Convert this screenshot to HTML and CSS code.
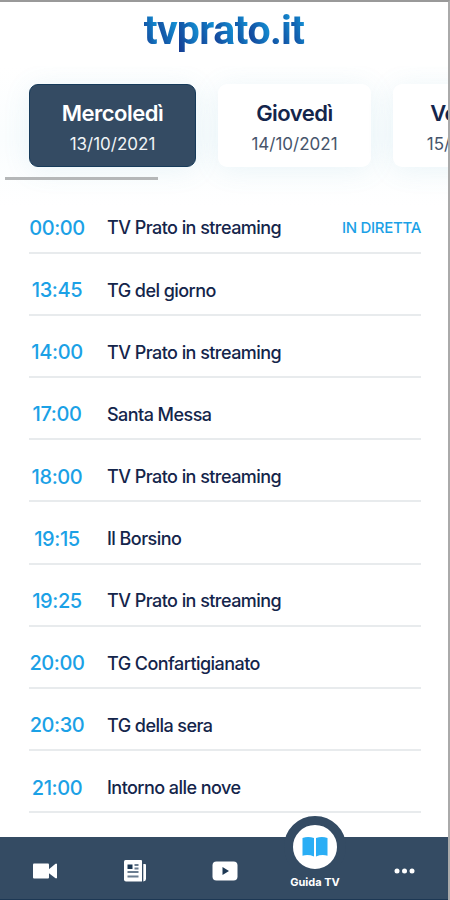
FILE: index.html
```html
<!DOCTYPE html>
<html lang="it">
<head>
    <meta charset="UTF-8">
    <meta name="viewport" content="width=device-width, initial-scale=1.0">
    <title>Guida TV</title>
    <link rel="stylesheet" href="styles.css">
</head>
<body>
    <div class="app">
        <header class="header">
            <h1 class="logo"><span>t</span><span>v</span><span>p</span><span>r</span><span>a</span><span>t</span><span>o</span><span>.</span><span>i</span><span>t</span></h1>
        </header>

        <!-- Giorni -->
        <section class="days">
            <div class="day active">
                <span class="day-name">Mercoledì</span>
                <span class="day-date">13/10/2021</span>
            </div>
            <div class="day">
                <span class="day-name">Giovedì</span>
                <span class="day-date">14/10/2021</span>
            </div>
            <div class="day">
                <span class="day-name">Venerdì</span>
                <span class="day-date">15/10/2021</span>
            </div>
        </section>
        <div class="scrollbar"></div>

        <!-- Palinsesto -->
        <ul class="programs">
            <li class="program"><span class="time">00:00</span><span class="title">TV Prato in streaming</span><span class="live">IN DIRETTA</span></li>
            <li class="program"><span class="time">13:45</span><span class="title">TG del giorno</span></li>
            <li class="program"><span class="time">14:00</span><span class="title">TV Prato in streaming</span></li>
            <li class="program"><span class="time">17:00</span><span class="title">Santa Messa</span></li>
            <li class="program"><span class="time">18:00</span><span class="title">TV Prato in streaming</span></li>
            <li class="program"><span class="time">19:15</span><span class="title">Il Borsino</span></li>
            <li class="program"><span class="time">19:25</span><span class="title">TV Prato in streaming</span></li>
            <li class="program"><span class="time">20:00</span><span class="title">TG Confartigianato</span></li>
            <li class="program"><span class="time">20:30</span><span class="title">TG della sera</span></li>
            <li class="program"><span class="time">21:00</span><span class="title">Intorno alle nove</span></li>
        </ul>

        <nav class="navbar">
            <a class="nav-item">
                <svg width="24" height="16" viewBox="0 0 24 16" fill="#fff">
                    <rect x="0" y="0.5" width="16" height="15" rx="1"/>
                    <path d="M15 7 L22.5 0.8 H24 V15.2 H22.5 L15 9.5 Z"/>
                </svg>
            </a>
            <a class="nav-item">
                <svg width="24" height="24" viewBox="0 0 24 24">
                    <path d="M2.5 1 H18 Q19 1 19 2 V22.5 H3 Q1 22.5 1 20.5 V2.5 Q1 1 2.5 1 Z" fill="#fff"/>
                    <path d="M20.3 5 H22 Q23 5 23 6 V20 Q23 22 20.3 22.5 Z" fill="#fff"/>
                    <rect x="4.5" y="5.5" width="5" height="4.5" fill="#1d3854"/>
                    <path d="M11.5 6 H15.5 M11.5 9.5 H15.5 M4.5 13 H15.5 M4.5 17.5 H15.5" stroke="#6b7d90" stroke-width="1.8"/>
                </svg>
            </a>
            <a class="nav-item">
                <svg width="26" height="20" viewBox="0 0 26 20">
                    <rect x="0.5" y="0.5" width="25" height="19" rx="4" fill="#fff"/>
                    <path d="M10.5 6 L17 10 L10.5 14 Z" fill="#1d3854"/>
                </svg>
            </a>
            <a class="nav-item current">
                <span class="bubble">
                    <svg width="26" height="22" viewBox="0 0 26 22" fill="#2aaef5">
                        <path d="M0.5 2 Q6 0 12 2 V20.5 Q6 18 0.5 19.8 Z"/>
                        <path d="M25.5 2 Q20 0 14 2 V20.5 Q20 18 25.5 19.8 Z"/>
                    </svg>
                </span>
                <span class="nav-label">Guida TV</span>
            </a>
            <a class="nav-item">
                <svg width="22" height="6" viewBox="0 0 22 6" fill="#fff">
                    <circle cx="3" cy="3" r="2.5"/>
                    <circle cx="10.5" cy="3" r="2.5"/>
                    <circle cx="18" cy="3" r="2.5"/>
                </svg>
            </a>
        </nav>
    </div>
</body>
</html>
```

FILE: styles.css
```css
* {
    box-sizing: border-box;
}

body {
    margin: 0;
    background-color: #fff;
    font-family: Inter, "Liberation Sans", sans-serif;
    color: #14254b;
}

.app {
    display: flex;
    flex-direction: column;
    width: 450px;
    height: 900px;
    overflow: hidden;
    border-top: 2px solid #999;
    border-right: 2px solid #aaa;
}

.header {
    flex: none;
    height: 64px;
    display: flex;
    justify-content: center;
}

.logo {
    display: flex;
    margin: 0;
    font-family: Roboto, sans-serif;
    font-size: 41px;
    line-height: 56px;
    font-weight: 700;
}

.logo span {
    margin-right: -0.8px;
    background: linear-gradient(75deg, #173a91 15%, #1268b5 50%, #159fdf 90%);
    -webkit-background-clip: text;
    background-clip: text;
    color: transparent;
}

.days {
    flex: none;
    display: flex;
    gap: 22px;
    height: 141px;
    margin-bottom: -30px;
    padding: 18px 0 40px 29px;
    overflow: hidden;
    background: linear-gradient(#fff, #fafdfe 50%, #fff);
}

.day {
    flex: none;
    display: flex;
    flex-direction: column;
    align-items: center;
    width: 153px;
    height: 83px;
    padding-top: 15px;
    border-radius: 9px;
    background-color: #fff;
    box-shadow: 0 3px 28px rgba(80, 160, 190, 0.11);
}

.day.active {
    width: 167px;
    background-color: #344b63;
    border: 1px solid #173b5a;
    padding-top: 14px;
    color: #fff;
}

.day-name {
    font-size: 22px;
    line-height: 28px;
    font-weight: 600;
    letter-spacing: -0.5px;
}

.day-date {
    margin-top: 5px;
    font-size: 17px;
    line-height: 24px;
    color: #46546b;
}

.active .day-date {
    color: #f0f4f7;
}

.scrollbar {
    flex: none;
    width: 153px;
    height: 3px;
    margin-left: 5px;
    background-color: #b5b7b8;
}

.programs {
    flex: 1;
    margin: 0;
    padding: 11.5px 27px 0 29px;
    list-style: none;
}

.program {
    display: flex;
    align-items: center;
    height: 62.2px;
    padding-top: 12.5px;
    border-bottom: 2px solid #e8ebed;
}

.time {
    width: 56px;
    text-align: center;
    font-size: 20px;
    font-weight: 500;
    letter-spacing: -0.4px;
    color: #1ba1e6;
}

.title {
    margin-left: 22px;
    font-size: 18px;
    font-weight: 500;
    letter-spacing: -0.55px;
}

.live {
    margin-left: auto;
    font-size: 15px;
    font-weight: 500;
    letter-spacing: -0.3px;
    color: #1ba1e6;
}

.navbar {
    flex: none;
    display: flex;
    height: 63px;
    padding-top: 5px;
    background-color: #344b63;
    border-bottom: 1px solid #1d3854;
    margin-right: -2px;
}

.nav-item {
    flex: 1;
    display: flex;
    align-items: center;
    justify-content: center;
}

.current {
    flex-direction: column;
    justify-content: flex-start;
}

.bubble {
    flex: none;
    display: flex;
    align-items: center;
    justify-content: center;
    width: 62px;
    height: 62px;
    margin-top: -26px;
    border: 9px solid #344b63;
    border-radius: 50%;
    background-color: #fff;
}

.nav-label {
    margin-top: -3px;
    font-size: 11px;
    line-height: 14px;
    font-weight: 700;
    color: #fff;
}
```
